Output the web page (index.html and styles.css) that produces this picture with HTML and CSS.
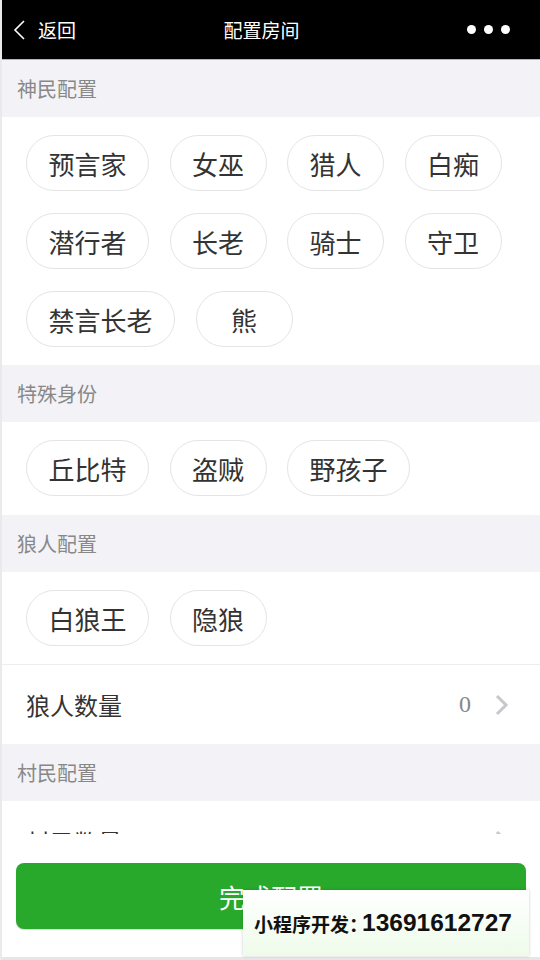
FILE: index.html
```html
<!DOCTYPE html>
<html lang="zh-CN">
<head>
  <meta charset="UTF-8">
  <meta name="viewport" content="width=device-width, initial-scale=1.0">
  <title>配置房间</title>
  <link rel="stylesheet" href="styles.css">
</head>
<body>
  <div class="app">
    <!-- Nav bar -->
    <header class="navbar">
      <div class="nav-back">
        <svg class="back-icon" width="14" height="20" viewBox="0 0 14 20">
          <path d="M11 1 L2 10 L11 19" fill="none" stroke="#fff" stroke-width="1.6"/>
        </svg>
        <span>返回</span>
      </div>
      <div class="nav-title">配置房间</div>
      <div class="nav-more">
        <span class="dot"></span><span class="dot"></span><span class="dot"></span>
      </div>
    </header>

    <main class="content">
      <div class="section-title">神民配置</div>
      <div class="chips">
        <span class="chip">预言家</span>
        <span class="chip">女巫</span>
        <span class="chip">猎人</span>
        <span class="chip">白痴</span>
        <span class="chip">潜行者</span>
        <span class="chip">长老</span>
        <span class="chip">骑士</span>
        <span class="chip">守卫</span>
        <span class="chip">禁言长老</span>
        <span class="chip">熊</span>
      </div>

      <div class="section-title">特殊身份</div>
      <div class="chips chips-last">
        <span class="chip">丘比特</span>
        <span class="chip">盗贼</span>
        <span class="chip">野孩子</span>
      </div>

      <div class="section-title">狼人配置</div>
      <div class="chips">
        <span class="chip">白狼王</span>
        <span class="chip">隐狼</span>
      </div>
      <div class="cell">
        <span class="cell-label">狼人数量</span>
        <span class="cell-value">0</span>
        <svg class="arrow" width="14" height="22" viewBox="0 0 14 22">
          <path d="M2 2 L11 11 L2 20" fill="none" stroke="#c7c7cc" stroke-width="3"/>
        </svg>
      </div>

      <div class="section-title">村民配置</div>
      <div class="cell cell-plain">
        <span class="cell-label">村民数量</span>
        <span class="cell-value">0</span>
        <svg class="arrow" width="14" height="22" viewBox="0 0 14 22">
          <path d="M2 2 L11 11 L2 20" fill="none" stroke="#c7c7cc" stroke-width="3"/>
        </svg>
      </div>
    </main>

    <footer class="footer">
      <button class="btn-done" type="button">完成配置</button>
      <div class="promo">小程序开发：<b>13691612727</b></div>
    </footer>
  </div>
</body>
</html>
```

FILE: styles.css
```css
/* General */
body {
  margin: 0;
  padding: 0;
  font-family: "Noto Sans CJK SC", "Noto Sans", sans-serif;
  background-color: #fff;
}

.app {
  width: 540px;
  height: 960px;
  box-sizing: border-box;
  border-left: 2px solid #eaeaea;
  display: flex;
  flex-direction: column;
  overflow: hidden;
}

/* Nav bar */
.navbar {
  height: 60px;
  flex-shrink: 0;
  background-color: #000;
  color: #fff;
  display: flex;
  align-items: center;
  justify-content: space-between;
  padding: 0 30px 0 11px;
  box-sizing: border-box;
  border-bottom: 1px solid #b5b5b5;
}

.nav-back {
  display: flex;
  align-items: center;
  gap: 11px;
  font-size: 19px;
  width: 110px;
}

.nav-title {
  font-size: 19px;
}

.nav-more {
  width: 110px;
  display: flex;
  justify-content: flex-end;
  gap: 8px;
}

.dot {
  width: 9px;
  height: 9px;
  border-radius: 50%;
  background-color: #fff;
}

/* Content */
.content {
  flex: 1;
  overflow: hidden;
}

.section-title {
  height: 57px;
  line-height: 57px;
  padding-left: 15px;
  background-color: #f3f3f7;
  color: #888;
  font-size: 20px;
}

.chips {
  display: flex;
  flex-wrap: wrap;
  gap: 22px 20.5px;
  padding: 18px 24px;
}

.chips-last {
  padding-bottom: 19px;
}

.chip {
  box-sizing: border-box;
  height: 56px;
  min-width: 97px;
  padding: 0 21.5px;
  border: 1px solid #e4e4e4;
  border-radius: 28px;
  display: flex;
  align-items: center;
  justify-content: center;
  font-size: 26px;
  color: #333;
}

/* Cells */
.cell {
  height: 80px;
  box-sizing: border-box;
  border-top: 1px solid #eeeeee;
  display: flex;
  align-items: center;
  padding: 0 31px 0 24px;
}

.cell-plain {
  border-top: none;
}

.cell-label {
  flex: 1;
  font-size: 24px;
  color: #333;
}

.cell-value {
  font-family: "Liberation Serif", serif;
  font-size: 24px;
  color: #888;
  margin-right: 24px;
}

/* Footer */
.footer {
  height: 126px;
  flex-shrink: 0;
  background-color: #fff;
  padding: 29px 14px 0 14px;
  box-sizing: border-box;
  border-bottom: 3px solid #e6e6e6;
  position: relative;
}

.btn-done {
  width: 100%;
  height: 66px;
  border: none;
  border-radius: 8px;
  background-color: #28a92b;
  color: #fff;
  font-family: "Noto Sans CJK SC", sans-serif;
  font-size: 26px;
  box-shadow: 0 1px 1px rgba(0, 0, 0, 0.15);
}

/* Watermark overlay */
.promo {
  position: absolute;
  left: 241px;
  top: 56px;
  width: 286px;
  height: 66px;
  box-sizing: border-box;
  padding-left: 11px;
  display: flex;
  align-items: center;
  background: linear-gradient(#ffffff, #eefbea);
  box-shadow: 0 0 3px rgba(0, 0, 0, 0.2);
  font-size: 19px;
  font-weight: bold;
  color: #111;
}

.promo b {
  font-family: "Liberation Sans", Arial, sans-serif;
  font-size: 24.5px;
  margin-left: -6px;
}
```
